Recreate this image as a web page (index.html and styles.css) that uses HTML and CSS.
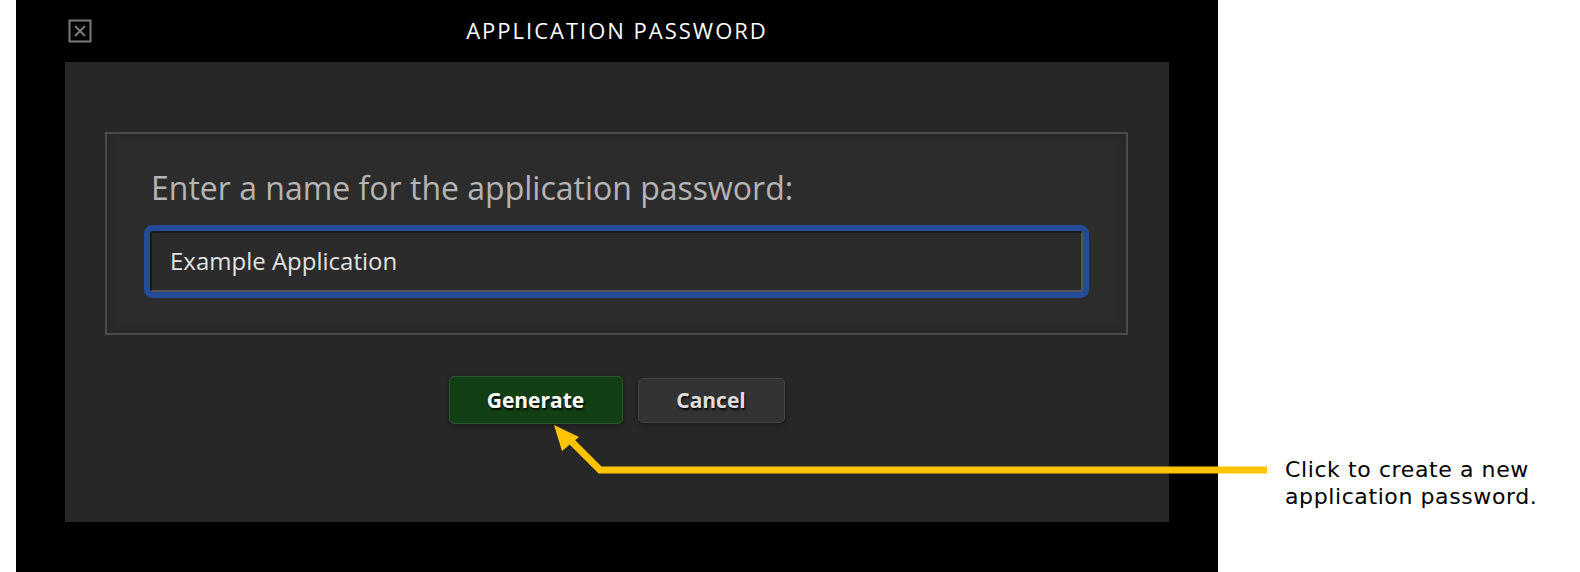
FILE: index.html
```html
<!DOCTYPE html>
<html lang="en">
<head>
    <meta charset="UTF-8">
    <meta name="viewport" content="width=device-width, initial-scale=1.0">
    <title>Application Password</title>
    <link rel="stylesheet" href="styles.css">
</head>
<body>
    <div class="page">
        <div class="dialog">
            <div class="dialog-header">
                <button class="close-btn" aria-label="Close">
                    <svg viewBox="0 0 24 24" width="24" height="24">
                        <rect x="1.5" y="1.5" width="21" height="21" fill="none" stroke="#7a7a7a" stroke-width="2" />
                        <path d="M7 7 L17 17 M17 7 L7 17" stroke="#7a7a7a" stroke-width="2" />
                    </svg>
                </button>
                <h1>APPLICATION PASSWORD</h1>
            </div>

            <div class="panel">
                <div class="name-box">
                    <label for="app-name">Enter a name for the application password:</label>
                    <input id="app-name" type="text" value="Example Application">
                </div>

                <div class="actions">
                    <button class="btn btn-generate">Generate</button>
                    <button class="btn btn-cancel">Cancel</button>
                </div>
            </div>
        </div>

        <p class="callout-text">Click to create a new<br>application password.</p>
    </div>

    <!-- callout arrow drawn over the dialog -->
    <svg class="callout-arrow" viewBox="0 0 1580 572" width="1580" height="572">
        <path d="M1267 470 H600 L572 442" fill="none" stroke="#ffc400" stroke-width="7" />
        <polygon points="554,425 562,451 579,437" fill="#ffc400" />
    </svg>
</body>
</html>
```

FILE: styles.css
```css
:root {
    --dialog-bg: #000;
    --panel-bg: #272727;
    --box-bg: #2c2c2c;
    --box-border: #4b4b4b;
    --focus-color: #244c96;
    --text-light: #e2e2e2;
    --label-color: #b4b4b4;
    --callout-color: #ffc400;
}

body {
    margin: 0;
    background-color: #fff;
    font-family: "Open Sans", "Noto Sans", sans-serif;
    position: relative;
    overflow: hidden;
}

.page {
    display: flex;
    padding-left: 16px;
    height: 572px;
}

.dialog {
    width: 1202px;
    height: 572px;
    background-color: var(--dialog-bg);
    display: flex;
    flex-direction: column;
    align-items: center;
}

.dialog-header {
    width: 100%;
    height: 62px;
    position: relative;
    display: flex;
    align-items: center;
    justify-content: center;
}

.dialog-header h1 {
    margin: 0;
    font-size: 22px;
    font-weight: 400;
    letter-spacing: 2px;
    color: #fff;
    padding-bottom: 2px;
}

.close-btn {
    position: absolute;
    left: 52px;
    top: 19px;
    padding: 0;
    border: none;
    background: none;
    line-height: 0;
    cursor: pointer;
}

.panel {
    width: 1104px;
    height: 460px;
    background-color: var(--panel-bg);
    padding: 70px 41px 0 40px;
    box-sizing: border-box;
}

.name-box {
    height: 203px;
    box-sizing: border-box;
    border: 2px solid var(--box-border);
    background-color: var(--box-bg);
    box-shadow: inset 0 0 12px rgba(0, 0, 0, 0.15);
    padding: 34px 43px 0 43px;
    display: flex;
    flex-direction: column;
}

.name-box label {
    font-size: 32px;
    color: var(--label-color);
    line-height: 40px;
    margin-left: 1px;
}

.name-box input {
    margin-top: 23px;
    height: 61px;
    box-sizing: border-box;
    background-color: #2b2b2b;
    border: 2px solid #555;
    border-top-color: #181818;
    border-left-color: #181818;
    border-radius: 3px;
    box-shadow: 0 0 0 6px var(--focus-color);
    outline: none;
    padding: 0 18px 3px;
    font-family: "Open Sans", "Noto Sans", sans-serif;
    font-size: 24px;
    color: var(--text-light);
}

.actions {
    display: flex;
    justify-content: center;
    align-items: center;
    gap: 15px;
    margin-top: 41px;
}

.btn {
    font-family: "Open Sans", "Noto Sans", sans-serif;
    font-weight: bold;
    font-size: 21px;
    border-radius: 5px;
    cursor: pointer;
    text-shadow: 1px 2px 2px rgba(0, 0, 0, 0.9);
    box-shadow: 0 2px 4px rgba(0, 0, 0, 0.35);
}

.btn-generate {
    width: 174px;
    height: 48px;
    background-color: #133f15;
    border: 1px solid #2a5629;
    color: #fff;
}

.btn-cancel {
    width: 147px;
    height: 45px;
    background-color: #333;
    border: 1px solid #444;
    color: #ddd;
}

.callout-text {
    margin: 456px 0 0 67px;
    font-family: "DejaVu Sans", Verdana, sans-serif;
    font-size: 22px;
    letter-spacing: 0.6px;
    line-height: 27px;
    color: #000;
}

.callout-arrow {
    position: absolute;
    left: 0;
    top: 0;
    pointer-events: none;
}
```
